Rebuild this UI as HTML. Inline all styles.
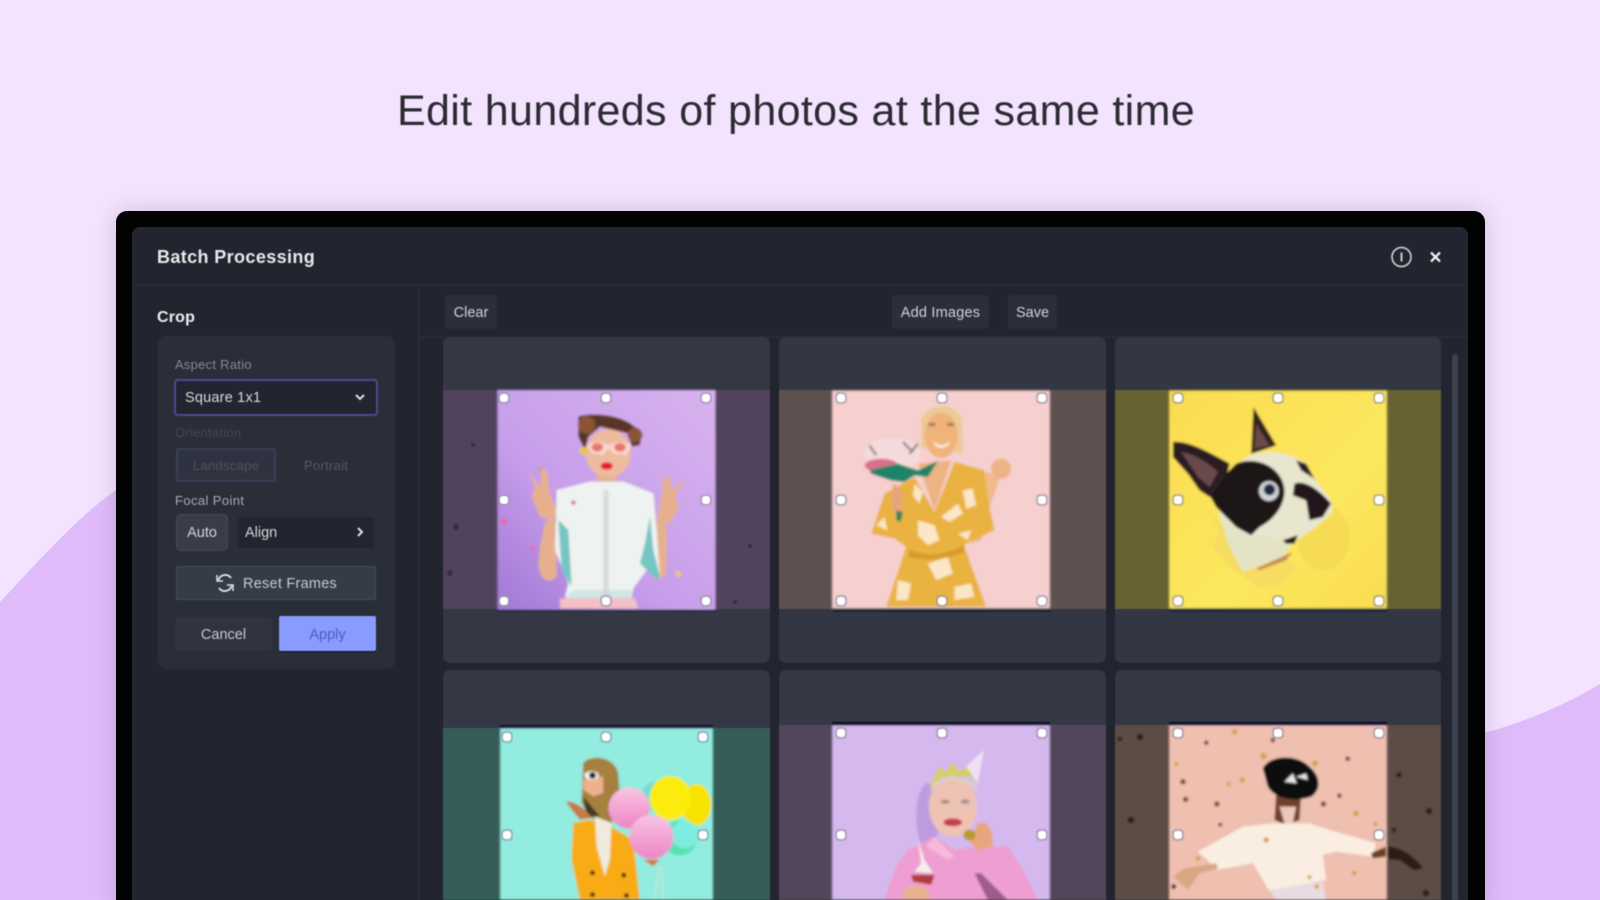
<!DOCTYPE html>
<html lang="en"><head><meta charset="utf-8"><title>Batch Processing</title>
<style>
html,body{margin:0;padding:0;width:1600px;height:900px;overflow:hidden;background:#f3e3fe;font-family:"Liberation Sans",sans-serif}
#s{position:absolute;left:0;top:0;width:1600px;height:900px;overflow:hidden}
.a{position:absolute;box-sizing:border-box}
.t{position:absolute;white-space:nowrap;line-height:1}
.c{display:flex;align-items:center;justify-content:center;padding-top:2px}
#ui{position:absolute;left:0;top:0;width:1600px;height:900px;filter:blur(.6px)}
</style></head><body><div id="s">
<svg class="a" style="left:0;top:0" width="1600" height="900" viewBox="0 0 1600 900">
<rect width="1600" height="900" fill="#f3e3fe"/>
<path d="M0 602C40 560 76 518 116 490L1484 733C1525 722 1565 705 1600 684V900H0Z" fill="#dfbcf9"/>
</svg>
<div class="a" style="left:116px;top:211px;width:1369px;height:700px;background:#020203;border-radius:11px;box-shadow:0 0 22px rgba(70,40,90,.2)"></div>
<div class="a" style="left:132px;top:227px;width:1336px;height:680px;background:#22252f;border-radius:8px"></div>
<div class="t" style="left:397px;top:90px;font-size:43px;color:#2b2b31;letter-spacing:.35px;filter:blur(.4px)">Edit hundreds of photos at the same time</div>

<div id="ui">
<div class="a" style="left:132px;top:284px;width:1336px;height:2px;background:#292c37"></div>
<div class="a" style="left:418px;top:286px;width:2px;height:620px;background:#292c37"></div>
<div class="a" style="left:420px;top:336px;width:1048px;height:2px;background:#292c37"></div>
<div class="t" style="left:157px;top:248px;font-size:18px;font-weight:700;color:#e9e9ec;letter-spacing:.38px">Batch Processing</div>
<svg class="a" style="left:1388px;top:246px" width="60" height="22" viewBox="0 0 60 22"><circle cx="13.500" cy="11" r="9.500" fill="none" stroke="#c9c9cd" stroke-width="1.700"/><path d="M13.500 6.500v9" stroke="#c9c9cd" stroke-width="2"/><path d="M43 6.500l9 9M52 6.500l-9 9" stroke="#eeeeef" stroke-width="2.300"/></svg>
<div class="t" style="left:157px;top:310px;font-size:16px;font-weight:700;color:#eeeef0;letter-spacing:.2px">Crop</div>

<div class="a" style="left:158px;top:336px;width:237px;height:333px;background:#2a2e39;border-radius:8px"></div>
<div class="t" style="left:175px;top:358px;font-size:13px;color:#85889a;letter-spacing:.25px">Aspect Ratio</div>
<div class="a" style="left:174px;top:379px;width:204px;height:37px;background:#22252f;border:2px solid #4c4a90;border-radius:4px"></div>
<div class="t" style="left:185px;top:391px;font-size:14.500px;color:#d8d8dc;letter-spacing:.2px">Square 1x1</div>
<svg class="a" style="left:354px;top:392px" width="12" height="10" viewBox="0 0 12 10"><path d="M2 3l4 4 4-4" fill="none" stroke="#dddde0" stroke-width="2"/></svg>
<div class="t" style="left:175px;top:426px;font-size:13px;color:#444855;letter-spacing:.25px">Orientation</div>
<div class="a c" style="left:176px;top:448px;width:100px;height:34px;border:2px solid #3a3e58;background:#2f3340;border-radius:2px;font-size:13px;color:#4f5362;letter-spacing:.3px;padding-top:0">Landscape</div>
<div class="t" style="left:304px;top:459px;font-size:13px;color:#555967;letter-spacing:.3px">Portrait</div>
<div class="t" style="left:175px;top:494px;font-size:13px;color:#a9abb3;letter-spacing:.4px">Focal Point</div>
<div class="a c" style="left:176px;top:514px;width:52px;height:37px;background:#383d49;border:1px solid #444957;border-radius:5px;font-size:14.500px;color:#d4d4d8;padding-top:0">Auto</div>
<div class="a" style="left:238px;top:517px;width:136px;height:31px;background:#22252f;border-radius:3px"></div>
<div class="t" style="left:245px;top:526px;font-size:14.500px;color:#d4d4d8">Align</div>
<svg class="a" style="left:354px;top:526px" width="12" height="12" viewBox="0 0 12 12"><path d="M4 2l4 4-4 4" fill="none" stroke="#dddde0" stroke-width="2"/></svg>
<div class="a" style="left:176px;top:566px;width:200px;height:34px;background:#363b48;border:1.500px solid #464b58;border-radius:2px"></div>
<svg class="a" style="left:214px;top:572px" width="22" height="22" viewBox="0 0 22 22"><path d="M4.500 8A7 7 0 0 1 17 6M17.500 14A7 7 0 0 1 5 16" fill="none" stroke="#e3e3e6" stroke-width="1.800"/><path d="M3 3v6h6M19 19v-6h-6" fill="none" stroke="#e3e3e6" stroke-width="1.500"/></svg>
<div class="t" style="left:243px;top:577px;font-size:14.500px;color:#c9cad0;letter-spacing:.25px">Reset Frames</div>
<div class="a c" style="left:175px;top:617px;width:97px;height:34px;background:#2f3440;border-radius:3px;font-size:14.500px;color:#c8c9cf">Cancel</div>
<div class="a c" style="left:279px;top:616px;width:97px;height:35px;background:#8a9bff;border-radius:2px;font-size:14.500px;color:#4c5bc6;box-shadow:0 1px 1px #111">Apply</div>

<div class="a c" style="left:445px;top:295px;width:52px;height:34px;background:#2b2f3a;border-radius:3px;font-size:14.500px;color:#d2d3d8">Clear</div>
<div class="a c" style="left:892px;top:295px;width:97px;height:34px;background:#2b2f3a;border-radius:3px;font-size:14.500px;color:#d2d3d8;letter-spacing:.2px">Add Images</div>
<div class="a c" style="left:1008px;top:295px;width:49px;height:34px;background:#2b2f3a;border-radius:3px;font-size:14.500px;color:#d2d3d8">Save</div>

<svg class="a" style="left:0;top:0" width="1600" height="900" viewBox="0 0 1600 900">
<defs>
<filter id="b" x="-5%" y="-5%" width="110%" height="110%"><feGaussianBlur stdDeviation="1"/></filter>
<g id="h"><rect x="-6" y="-6" width="12" height="12" rx="4" fill="#9a9aa8" opacity=".6"/><rect x="-4" y="-4" width="8" height="8" rx="3" fill="#fff"/></g>
<linearGradient id="p1" x1="1" y1="0" x2="0" y2="1"><stop offset="0" stop-color="#d8b3ee"/><stop offset=".6" stop-color="#c69eea"/><stop offset="1" stop-color="#a177d6"/></linearGradient>
<linearGradient id="y1" x1="0" y1="0" x2="1" y2="1"><stop offset="0" stop-color="#fbdc50"/><stop offset=".6" stop-color="#fde75e"/><stop offset="1" stop-color="#f9dc50"/></linearGradient>
<linearGradient id="pk" x1="0" y1="0" x2="0" y2="1"><stop offset="0" stop-color="#f8c5e2"/><stop offset="1" stop-color="#ee84c6"/></linearGradient>
</defs>
<rect x="1452" y="354" width="6" height="560" rx="3" fill="#3d424f"/>
<rect x="443" y="337" width="327" height="326" rx="7" fill="#333844"/>
<rect x="779" y="337" width="327" height="326" rx="7" fill="#323743"/>
<rect x="1115" y="337" width="326" height="326" rx="7" fill="#323743"/>
<rect x="443" y="670" width="327" height="240" rx="7" fill="#333844"/>
<rect x="779" y="670" width="327" height="240" rx="7" fill="#333844"/>
<rect x="1115" y="670" width="326" height="240" rx="7" fill="#333844"/>

<!-- Card 1 -->
<rect x="443" y="390" width="327" height="219" fill="#51425d"/>
<rect x="497" y="610" width="219" height="2" fill="#1b2235"/>
<g filter="url(#b)"><svg x="497" y="390" width="219" height="220" viewBox="172 180 655 660">
<rect x="172" y="180" width="655" height="660" fill="url(#p1)"/>
<g fill="#e6b08f">
<path d="M295 700C300 640 310 590 320 570L352 575 350 740C335 760 300 760 295 700Z"/>
<path d="M680 560L650 575 625 720C640 750 670 760 680 720Z"/>
<path d="M265 425L300 470 305 420 320 418 330 490 352 545 340 575 300 560 275 500 285 470Z"/>
<path d="M735 445L705 500 718 530 690 580 650 570 665 500 672 440 690 440 695 480Z"/>
<rect x="470" y="420" width="60" height="60"/>
</g>
<path d="M350 480L450 455 550 455 640 490 650 600 660 740 620 720 580 775 575 805 375 800 385 760 345 660Z" fill="#eef3f1"/>
<path d="M355 570L385 600 395 770 365 720ZM630 560L615 640 600 700 650 750 660 740 640 660Z" fill="#74c5c4"/>
<path d="M400 780H575V805H375Z" fill="#cfe6e4"/>
<rect x="490" y="480" width="16" height="320" fill="#cfcdd0" opacity=".6"/>
<path d="M360 805H585L595 835H360Z" fill="#f4c0c4"/>
<path d="M415 260C450 250 520 250 570 280L605 305 600 345 575 350 565 310 480 290 445 320 435 360 415 320Z" fill="#5a3526"/>
<circle cx="440" cy="285" r="26" fill="#8a5430"/><circle cx="585" cy="315" r="22" fill="#8a5430"/>
<ellipse cx="505" cy="370" rx="68" ry="72" fill="#edbb9d"/>
<path d="M440 345C465 330 490 340 505 345 530 335 555 335 575 345L560 375 525 372 505 355 488 375 455 370Z" fill="#f7d8d0"/>
<ellipse cx="472" cy="352" rx="17" ry="13" fill="#e87766"/><ellipse cx="540" cy="352" rx="17" ry="13" fill="#e87766"/>
<ellipse cx="500" cy="408" rx="18" ry="11" fill="#e6172f"/>
<circle cx="430" cy="362" r="12" fill="#e8c73a"/>
<g fill="#e569b5"><circle cx="192" cy="575" r="10"/><circle cx="278" cy="655" r="8"/><circle cx="400" cy="518" r="7"/></g>
<circle cx="715" cy="732" r="9" fill="#eec66b"/><circle cx="300" cy="418" r="7" fill="#d3a06c"/>
</svg></g>
<g fill="#3c2b42"><circle cx="473" cy="445" r="2"/><circle cx="456" cy="527" r="3"/><circle cx="750" cy="546" r="2"/><circle cx="450" cy="573" r="3"/><circle cx="735" cy="602" r="2"/></g>
<use href="#h" x="504" y="398"/><use href="#h" x="606" y="398"/><use href="#h" x="706" y="398"/><use href="#h" x="504" y="500"/><use href="#h" x="706" y="500"/><use href="#h" x="504" y="601"/><use href="#h" x="606" y="601"/><use href="#h" x="706" y="601"/>

<!-- Card 2 -->
<rect x="779" y="390" width="327" height="219" fill="#5f514f"/>
<rect x="833" y="610" width="218" height="2" fill="#1b2235"/>
<g filter="url(#b)"><svg x="832" y="390" width="218" height="219" viewBox="172 180 655 655">
<rect x="172" y="180" width="655" height="655" fill="#f6cfcf"/>
<path d="M590 640C600 500 620 430 640 425L675 445 650 520 620 630Z" fill="#efbb8c"/>
<circle cx="680" cy="415" r="30" fill="#eeb384"/>
<path d="M340 610L365 480 410 470 400 630Z" fill="#c97f4f"/>
<path d="M440 280C440 215 560 205 562 280L565 370 440 350Z" fill="#edc996"/>
<ellipse cx="500" cy="315" rx="50" ry="68" fill="#f0b37b"/>
<ellipse cx="472" cy="282" rx="12" ry="5" fill="#a8754e"/><ellipse cx="528" cy="282" rx="12" ry="5" fill="#a8754e"/>
<path d="M475 330Q500 360 528 330L520 345Q500 360 482 345Z" fill="#fff0e0"/>
<path d="M530 390L480 540 430 400Z" fill="#eeb384"/>
<path d="M420 440L480 545 540 395 630 420 645 530 660 600 575 640 570 650 635 830H335L395 650 360 625 290 610 330 490Z" fill="#eab23f"/>
<g fill="#fbe6c5"><path d="M430 570l50 15 15 45-35 15-30-30z"/><path d="M500 560l50-40 15 30-40 25z"/><path d="M565 480l30-5 10 50-30 10z"/><path d="M460 700l60-20 15 50-50 20z"/><path d="M370 750l40 10-10 50-35 0z"/><path d="M540 770l50-10 10 40-60 10z"/><path d="M420 460l25 25-10 35-20-25z"/><path d="M305 585l25-25 8 40z"/><path d="M550 610l40-10-10 30z"/></g>
<path d="M405 660Q490 690 565 645L570 665Q490 700 400 680Z" fill="#d79b2c"/>
<ellipse cx="355" cy="370" rx="85" ry="48" fill="#f5dadc"/><ellipse cx="320" cy="405" rx="50" ry="20" fill="#d9708a"/>
<path d="M285 420L370 400 430 420 490 392 460 440 420 435 390 455 350 450 290 430Z" fill="#1f8467"/>
<path d="M355 460L385 480 378 575 350 530Z" fill="#e8a57b"/><path d="M365 540L385 545 378 575 365 570Z" fill="#2b8a58"/>
<path d="M285 345l20 30M385 335l30 30M430 340l-25 30" stroke="#8d8583" stroke-width="7"/>
</svg></g>
<use href="#h" x="841" y="398"/><use href="#h" x="942" y="398"/><use href="#h" x="1042" y="398"/><use href="#h" x="841" y="500"/><use href="#h" x="1042" y="500"/><use href="#h" x="841" y="601"/><use href="#h" x="942" y="601"/><use href="#h" x="1042" y="601"/>

<!-- Card 3 -->
<rect x="1115" y="390" width="326" height="219" fill="#666232"/>
<rect x="1169" y="610" width="218" height="2" fill="#192545"/>
<g filter="url(#b)"><svg x="1169" y="390" width="218" height="219" viewBox="178 180 655 655">
<rect x="178" y="180" width="655" height="655" fill="url(#y1)"/>
<ellipse cx="640" cy="620" rx="80" ry="100" fill="#e7c847" opacity=".3"/>
<path d="M290 540L330 600 310 650 350 700 400 740 450 775 520 760 560 720 555 690 470 700Z" fill="#f7dc62"/>
<path d="M325 540L355 640 400 725 520 680 560 620 480 540Z" fill="#e4e3c6"/>
<path d="M440 715L550 665 530 690 450 720Z" fill="#c48c55"/>
<path d="M190 335C230 330 290 360 360 400L340 480 300 500 270 480 235 430 190 380Z" fill="#2b1c20"/>
<path d="M215 365C255 370 300 400 325 425L300 470 265 440Z" fill="#6a4a4e"/>
<path d="M432 230L500 345 425 370Z" fill="#32221f"/><path d="M440 280L480 345 435 355Z" fill="#6a4a47"/>
<path d="M410 380C470 350 540 365 590 400L615 445 665 510 670 545 620 590 555 635 490 620 425 615 380 590 320 530 300 495 340 440Z" fill="#e8e6cf"/>
<path d="M380 400C440 375 520 410 525 480 525 530 490 570 450 590L425 615 380 590 320 530 300 495 340 440Z" fill="#1f1418"/>
<path d="M555 460C590 445 640 490 665 520L640 560 600 570 590 510 550 495Z" fill="#22171b"/>
<path d="M560 390L590 400 615 445 575 420Z" fill="#2a1e20"/>
<circle cx="478" cy="482" r="30" fill="#cfd3d5"/><circle cx="480" cy="478" r="17" fill="#1e2a3a"/>
<path d="M520 630L565 615 555 640 530 640Z" fill="#1c1514"/>
</svg></g>
<use href="#h" x="1178" y="398"/><use href="#h" x="1278" y="398"/><use href="#h" x="1379" y="398"/><use href="#h" x="1178" y="500"/><use href="#h" x="1379" y="500"/><use href="#h" x="1178" y="601"/><use href="#h" x="1278" y="601"/><use href="#h" x="1379" y="601"/>

<!-- Card 4 -->
<rect x="443" y="728" width="327" height="182" fill="#365c57"/>
<rect x="500" y="725" width="213" height="3" fill="#210a35"/>
<g filter="url(#b)"><svg x="500" y="728" width="213" height="172" viewBox="180 205 640 516">
<rect x="180" y="205" width="640" height="516" fill="#92ecdf"/>
<path d="M655 620l-10 100M665 620l5 100" stroke="#bfe3dc" stroke-width="6"/>
<circle cx="650" cy="410" r="45" fill="#7cdcd2"/>
<ellipse cx="770" cy="435" rx="45" ry="62" fill="#f7e202"/>
<ellipse cx="692" cy="415" rx="62" ry="66" fill="#fcec10"/>
<circle cx="720" cy="535" r="52" fill="#55e3b0"/><circle cx="735" cy="525" r="42" fill="#7deddd"/>
<path d="M430 310C450 285 520 285 535 340L540 400 510 510 450 470 425 430Z" fill="#a6813d"/>
<path d="M430 410L480 470 440 470Z" fill="#3f3822"/>
<path d="M400 490L450 480 520 505 580 540 600 720H420L395 600Z" fill="#f9ab12"/>
<path d="M465 470L515 490 510 600 495 650 470 560Z" fill="#f0ebdc"/>
<path d="M430 360L490 350 490 400 460 410 430 390Z" fill="#eeb18f"/>
<ellipse cx="455" cy="347" rx="22" ry="13" fill="#f3f3ee"/><circle cx="458" cy="347" r="10" fill="#111"/>
<path d="M378 425C410 425 440 450 455 475L420 480 395 450Z" fill="#c47b48"/>
<circle cx="568" cy="445" r="62" fill="url(#pk)"/>
<circle cx="635" cy="532" r="66" fill="url(#pk)"/>
<path d="M610 600L660 600 640 620Z" fill="#d8763c"/>
<g fill="#1b1611"><circle cx="458" cy="640" r="7"/><circle cx="552" cy="647" r="7"/><circle cx="458" cy="705" r="7"/><circle cx="560" cy="708" r="7"/></g>
</svg></g>
<use href="#h" x="507" y="737"/><use href="#h" x="606" y="737"/><use href="#h" x="703" y="737"/><use href="#h" x="507" y="835"/><use href="#h" x="703" y="835"/>

<!-- Card 5 -->
<rect x="779" y="725" width="327" height="185" fill="#54465a"/>
<rect x="832" y="722" width="218" height="3" fill="#0c0a22"/>
<g filter="url(#b)"><svg x="832" y="725" width="218" height="175" viewBox="172 195 655 525">
<rect x="172" y="195" width="655" height="525" fill="#d5b8ee"/>
<ellipse cx="460" cy="470" rx="35" ry="100" fill="#b48fd8" opacity=".7"/>
<path d="M575 320L628 270 610 370Z" fill="#f0e1f0"/>
<path d="M468 370L495 320 515 335 535 305 555 335 575 320 610 375 590 350 500 350 468 395Z" fill="#d6cf63"/>
<ellipse cx="535" cy="440" rx="72" ry="90" fill="#efc3b3"/>
<path d="M465 400C500 345 570 345 610 400L600 365 530 345 480 365Z" fill="#d8d0c7"/>
<ellipse cx="535" cy="487" rx="28" ry="12" fill="#c53e50"/>
<ellipse cx="512" cy="425" rx="14" ry="6" fill="#a28c90"/><ellipse cx="572" cy="425" rx="14" ry="6" fill="#a28c90"/>
<path d="M480 530L540 570 605 560 700 560 740 620 790 720H330L365 620 400 570Z" fill="#ee9ed0"/>
<path d="M480 530L540 590 520 600 455 560Z" fill="#f5b9dd"/><path d="M620 640L700 720H640L600 640Z" fill="#9d5c8e"/>
<path d="M610 490C640 480 660 510 655 560L610 570 585 545Z" fill="#e7a680"/>
<ellipse cx="585" cy="525" rx="18" ry="16" fill="#bb9a2b"/>
<path d="M430 540L440 610 420 635 475 640 450 600Z" fill="#f4eeeb"/>
<path d="M410 645H480L470 675 415 665Z" fill="#b23a3a"/>
<path d="M385 700C395 670 470 660 465 720H385Z" fill="#e8b292"/>
</svg></g>
<use href="#h" x="841" y="733"/><use href="#h" x="942" y="733"/><use href="#h" x="1042" y="733"/><use href="#h" x="841" y="835"/><use href="#h" x="1042" y="835"/>

<!-- Card 6 -->
<rect x="1115" y="725" width="326" height="185" fill="#5d4c45"/>
<rect x="1169" y="722" width="218" height="3" fill="#09092c"/>
<g filter="url(#b)">
<path d="M1381 847C1395 845 1410 852 1423 868L1414 870 1400 860 1381 858Z" fill="#2b1d14"/>
<g fill="#2a1e17"><circle cx="1120" cy="739" r="2"/><circle cx="1140" cy="737" r="3"/><circle cx="1131" cy="820" r="3"/><circle cx="1399" cy="775" r="2.500"/><circle cx="1429" cy="811" r="3"/><circle cx="1426" cy="893" r="3"/><circle cx="1394" cy="830" r="2"/></g>
<svg x="1169" y="725" width="218" height="175" viewBox="178 195 655 525">
<rect x="178" y="195" width="655" height="525" fill="#efbfb0"/>
<path d="M500 400H575L570 480 530 495 495 480Z" fill="#6f3f2e"/>
<path d="M510 440H560L550 490H525Z" fill="#ecc8bb"/>
<path d="M460 325C480 285 560 280 600 320 635 350 635 390 605 410 560 425 500 420 475 380 455 350Z" fill="#0e0d10"/>
<path d="M525 365l25-25 12 30zM560 350l30-10 5 20z" fill="#e7e7e3"/>
<path d="M490 490L600 490 660 510 800 550 790 590 680 575 640 585 650 660 480 695 430 610 325 630 265 575 400 500Z" fill="#f9eee1"/>
<path d="M480 690L640 665 650 720H500Z" fill="#e8dbe2"/>
<path d="M320 610L225 625 190 650 235 690 270 640 325 625Z" fill="#dba682"/>
<path d="M785 580L830 560 830 590 790 595Z" fill="#6c3d19"/>
<g fill="#d4a237"><circle cx="462" cy="288" r="9"/><circle cx="617" cy="310" r="9"/><circle cx="398" cy="360" r="8"/><circle cx="357" cy="372" r="6"/><circle cx="200" cy="312" r="6"/><circle cx="375" cy="215" r="8"/><circle cx="740" cy="460" r="8"/><circle cx="798" cy="492" r="6"/><circle cx="470" cy="540" r="8"/><circle cx="265" cy="595" r="7"/><circle cx="600" cy="652" r="6"/><circle cx="622" cy="680" r="7"/><circle cx="735" cy="640" r="7"/></g>
<g fill="#7a4a2f"><circle cx="220" cy="365" r="8"/><circle cx="228" cy="418" r="8"/><circle cx="322" cy="432" r="8"/><circle cx="690" cy="407" r="7"/><circle cx="642" cy="432" r="8"/><circle cx="715" cy="296" r="7"/><circle cx="332" cy="494" r="6"/><circle cx="290" cy="248" r="7"/><circle cx="490" cy="240" r="7"/></g>
<circle cx="192" cy="680" r="7" fill="#111"/>
</svg></g>
<use href="#h" x="1178" y="733"/><use href="#h" x="1278" y="733"/><use href="#h" x="1379" y="733"/><use href="#h" x="1178" y="835"/><use href="#h" x="1379" y="835"/>
</svg>
</div>
</div></body></html>
